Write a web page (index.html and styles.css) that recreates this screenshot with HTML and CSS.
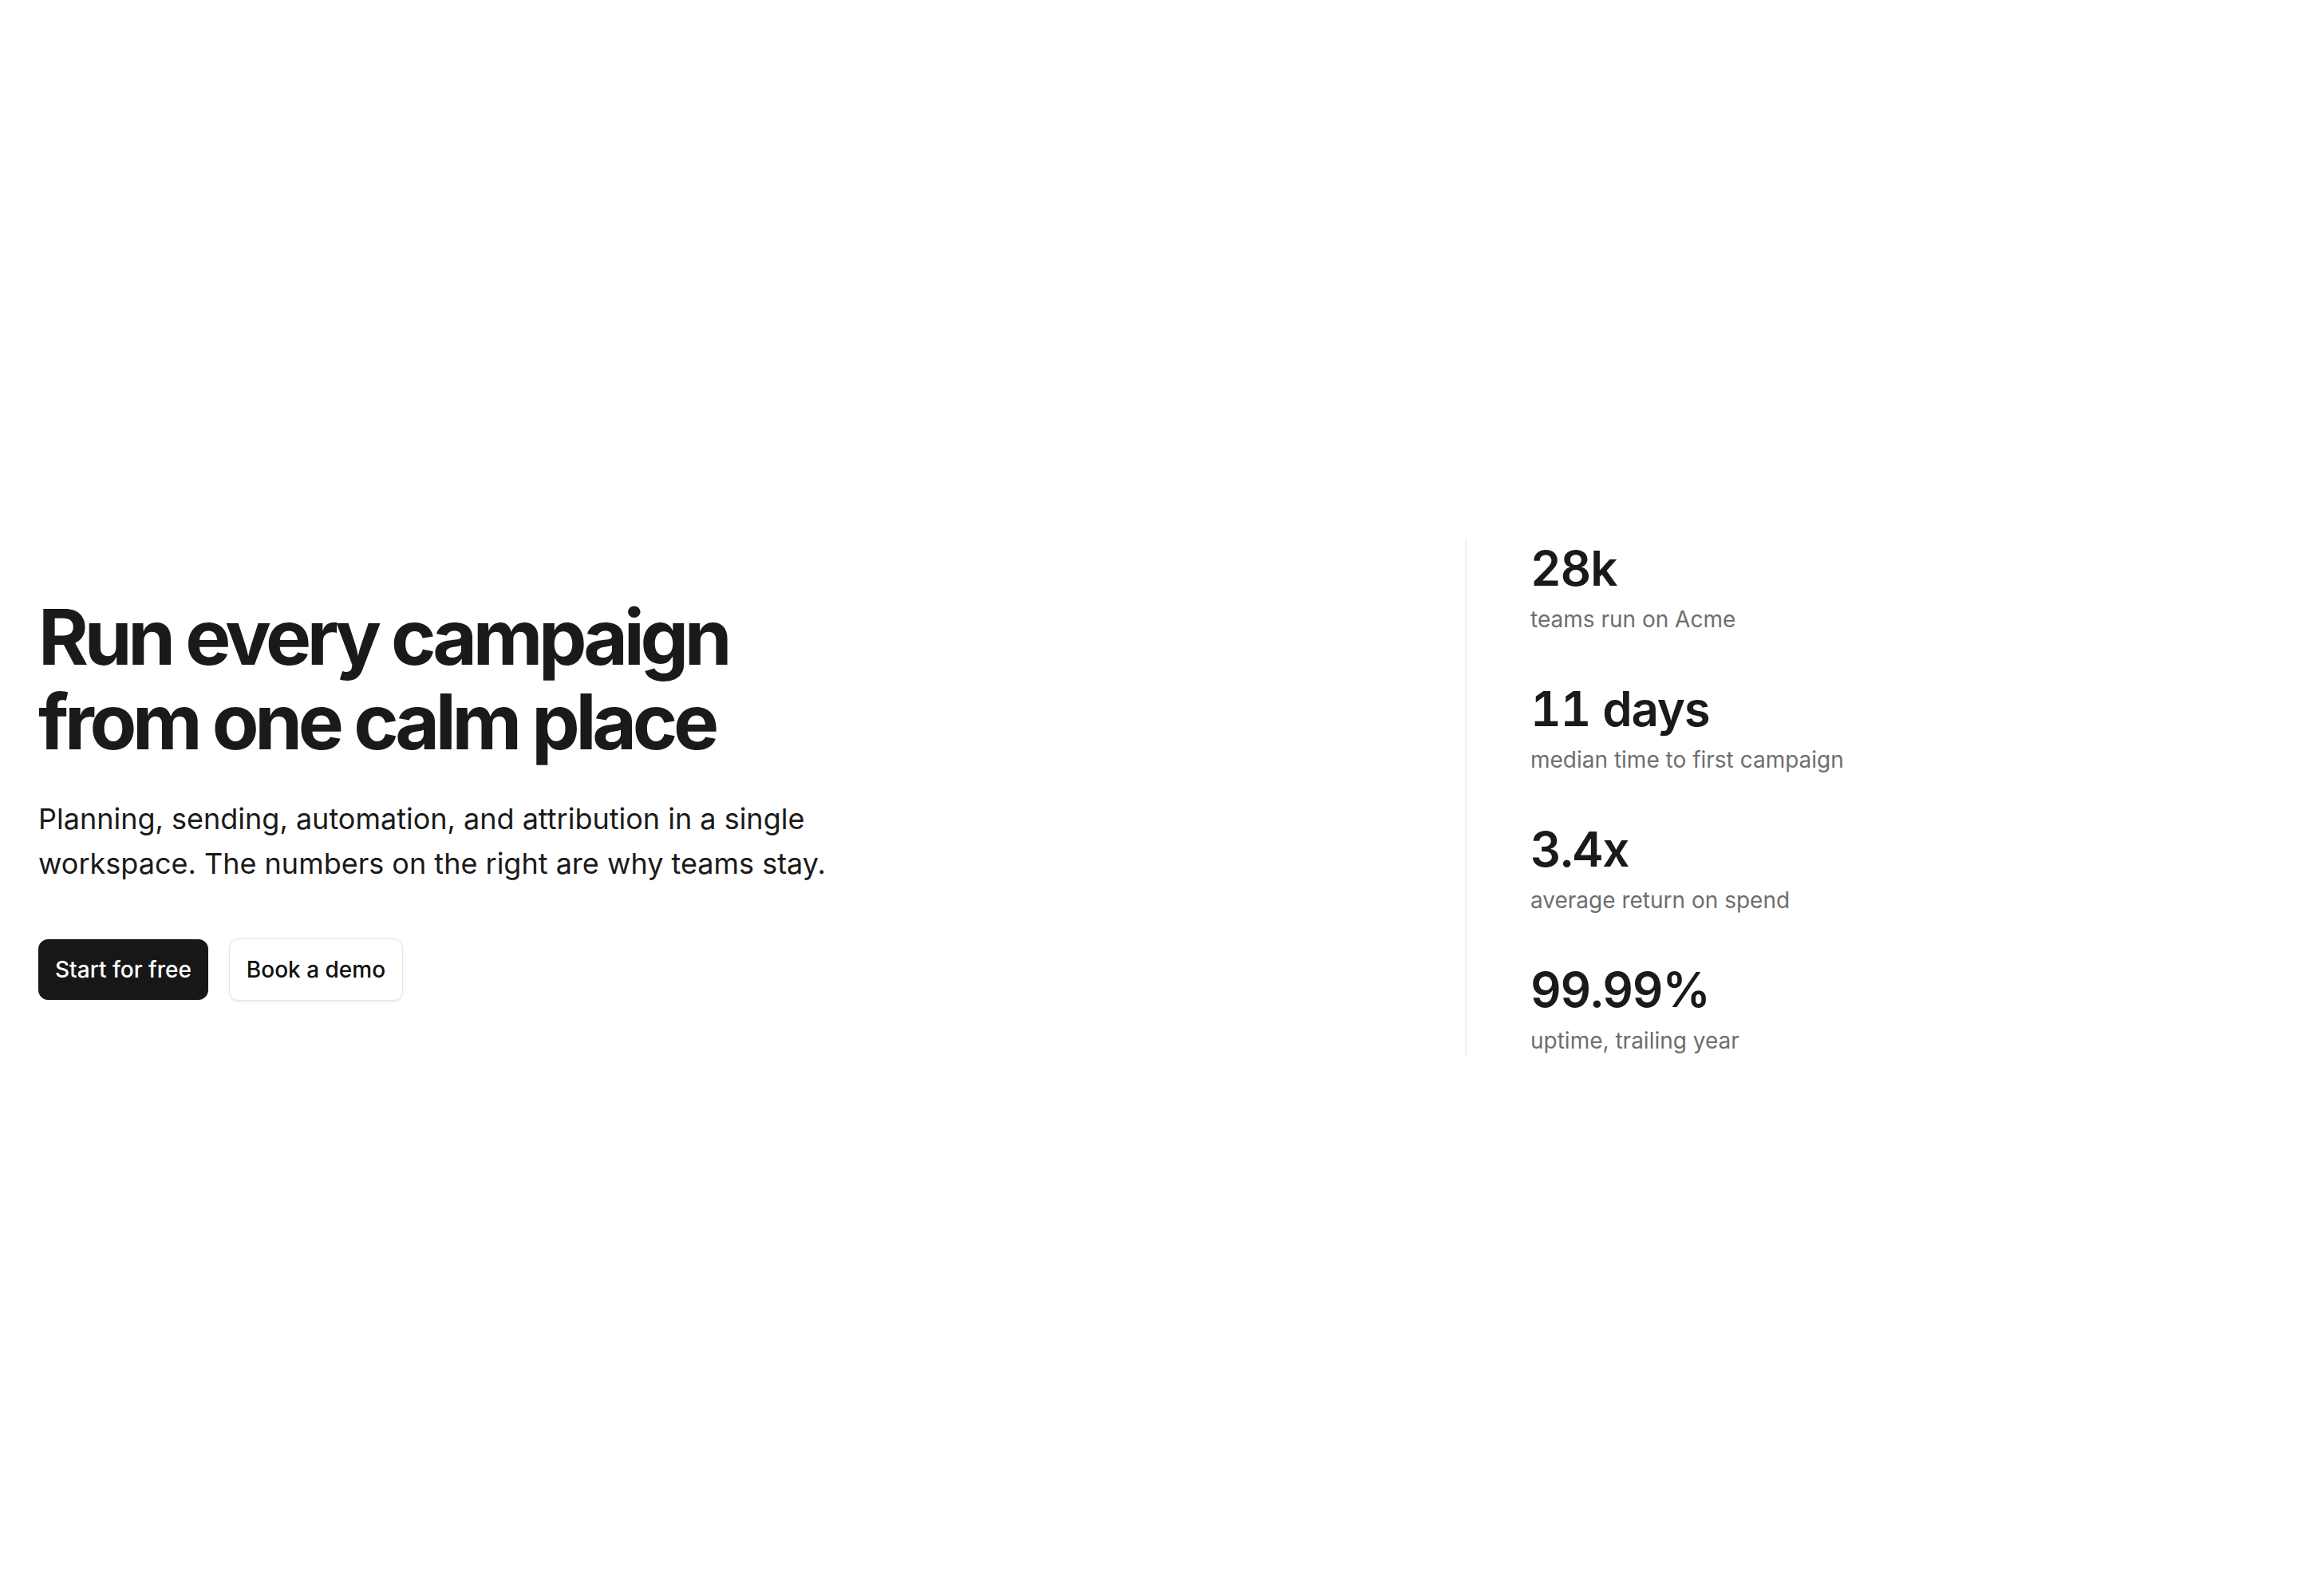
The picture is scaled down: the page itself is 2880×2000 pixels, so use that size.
FILE: index.html
```html
<!DOCTYPE html>
<html lang="en">
<head>
    <meta charset="UTF-8">
    <title>Acme — Run every campaign</title>
    <link rel="stylesheet" href="styles.css">
</head>
<body>

<section class="hero">

    <!-- Left: pitch -->
    <div class="pitch">
        <h1 class="headline">Run every campaign from one calm place</h1>
        <p class="lede">Planning, sending, automation, and attribution in a single workspace. The numbers on the right are why teams stay.</p>
        <div class="actions">
            <a class="btn btn-primary" href="#">Start for free</a>
            <a class="btn btn-ghost" href="#">Book a demo</a>
        </div>
    </div>

    <!-- Right: stats -->
    <div class="stats">
        <div class="stat">
            <div class="stat-value">28k</div>
            <div class="stat-label">teams run on Acme</div>
        </div>
        <div class="stat">
            <div class="stat-value">11 days</div>
            <div class="stat-label">median time to first campaign</div>
        </div>
        <div class="stat">
            <div class="stat-value">3.4x</div>
            <div class="stat-label">average return on spend</div>
        </div>
        <div class="stat">
            <div class="stat-value">99.99%</div>
            <div class="stat-label">uptime, trailing year</div>
        </div>
    </div>

</section>

</body>
</html>
```

FILE: styles.css
```css
* {
    box-sizing: border-box;
}
body {
    margin: 0;
    font-family: Inter, "Noto Sans", sans-serif;
    color: #1a1a1a;
    background: #fff;
}
.hero {
    min-height: 100vh;
    display: grid;
    grid-template-columns: 1fr 996px;
    align-items: center;
    padding: 0 48px;
}
.pitch {
    display: flex;
    flex-direction: column;
}
.headline {
    margin: 0;
    max-width: 940px;
    font-size: 96px;
    line-height: 1.1;
    font-weight: 700;
    letter-spacing: -0.055em;
}
.lede {
    margin: 41px 0 0;
    max-width: 1010px;
    font-size: 36px;
    line-height: 56px;
    color: #1a1a1a;
}
.actions {
    display: flex;
    align-items: center;
    gap: 26px;
    margin-top: 66px;
}
.btn {
    display: inline-block;
    padding: 19px 20px;
    font-size: 28px;
    line-height: 36px;
    font-weight: 500;
    text-decoration: none;
    border-radius: 12px;
    border: 1px solid transparent;
}
.btn-primary {
    background: #171717;
    border-color: #171717;
    color: #fff;
}
.btn-ghost {
    background: #fff;
    color: #111;
    border-color: #e2e2e2;
    box-shadow: 0 2px 3px rgba(0, 0, 0, 0.06);
    padding: 20px 21px;
}
.stats {
    border-left: 2px solid #efefef;
    padding-left: 80px;
    display: flex;
    flex-direction: column;
    gap: 56px;
}
.stat-value {
    font-size: 60px;
    line-height: 72px;
    font-weight: 600;
    letter-spacing: -0.02em;
    font-variant-numeric: tabular-nums;
}
.stat-label {
    margin-top: 9px;
    font-size: 28px;
    line-height: 39px;
    color: #6e6e6e;
}
```
